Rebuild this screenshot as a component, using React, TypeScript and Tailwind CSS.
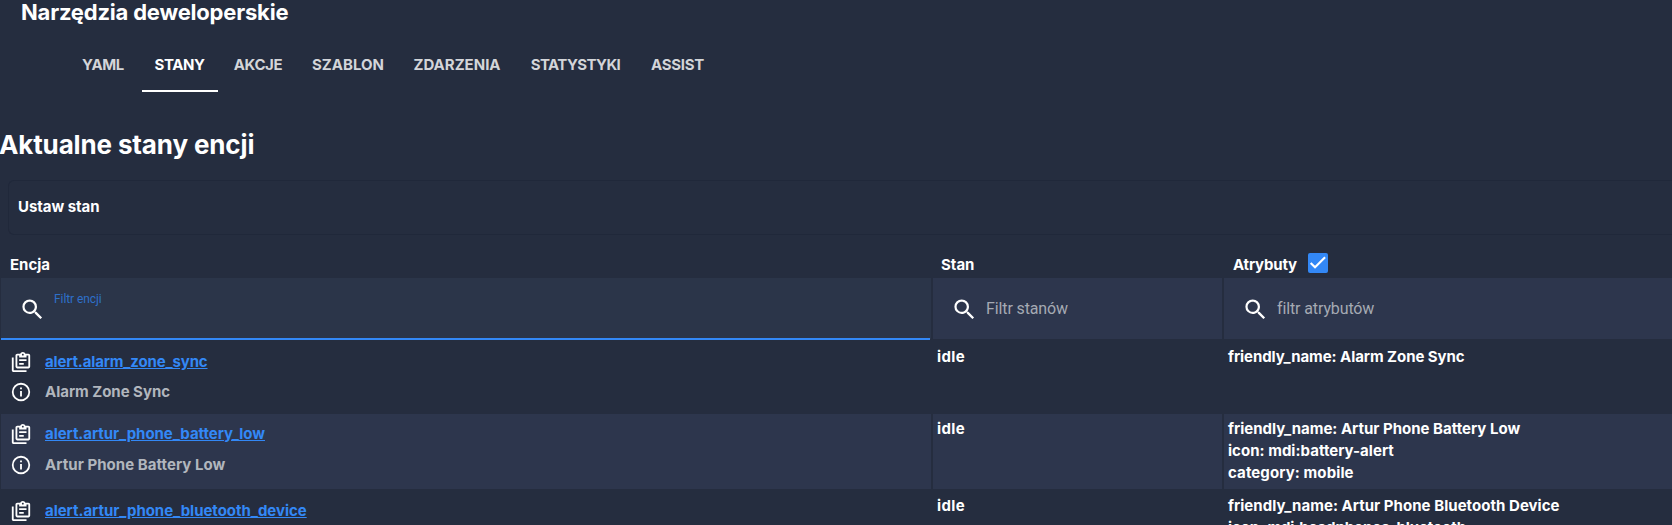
const tabs = [
  { label: "YAML", cls: "w-[75px] pr-[3px] tracking-[-0.4px]" },
  { label: "STANY", cls: "w-[76px] pr-px tracking-[-0.42px]", active: true },
  { label: "AKCJE", cls: "w-[80px] tracking-[-0.4px]" },
  { label: "SZABLON", cls: "w-[100px] tracking-[0px]" },
  { label: "ZDARZENIA", cls: "w-[118px] tracking-[0px]" },
  { label: "STATYSTYKI", cls: "w-[119px] tracking-[-0.6px]" },
  { label: "ASSIST", cls: "w-[85px] tracking-[-0.27px]" },
];

const rows = [
  {
    id: "alert.alarm_zone_sync",
    name: "Alarm Zone Sync",
    idCls: "tracking-[-0.15px]",
    nameCls: "tracking-[-0.03px]",
    height: "h-[73px]",
    pad: "pt-[9px]",
    gap: "mt-[6px]",
    top: "pt-[5px]",
    attrs: [{ t: "friendly_name: Alarm Zone Sync", c: "tracking-[-0.06px]" }],
  },
  {
    id: "alert.artur_phone_battery_low",
    name: "Artur Phone Battery Low",
    idCls: "tracking-[-0.05px]",
    nameCls: "tracking-[0.05px]",
    height: "h-[75px]",
    pad: "pt-[8px]",
    gap: "mt-[7px]",
    top: "pt-[4px]",
    alt: true,
    attrs: [
      { t: "friendly_name: Artur Phone Battery Low", c: "tracking-[0px]" },
      { t: "icon: mdi:battery-alert", c: "tracking-[0.03px]" },
      { t: "category: mobile", c: "tracking-[0.1px]" },
    ],
  },
  {
    id: "alert.artur_phone_bluetooth_device",
    name: "Artur Phone Bluetooth Device",
    idCls: "tracking-[-0.03px]",
    nameCls: "tracking-[0.05px]",
    height: "h-[97px]",
    pad: "pt-[10px]",
    gap: "mt-[7px]",
    top: "pt-[6px]",
    attrs: [
      { t: "friendly_name: Artur Phone Bluetooth Device", c: "tracking-[0.04px]" },
      { t: "icon: mdi:headphones-bluetooth", c: "tracking-[-0.1px]" },
    ],
  },
];

const columns = "grid grid-cols-[930px_289px_1fr] gap-x-[2px] pl-px";

function Icon({ d, className }: { d: string; className: string }) {
  return (
    <svg viewBox="0 0 24 24" fill="currentColor" className={className} aria-hidden="true">
      <path d={d} />
    </svg>
  );
}

const SEARCH =
  "M9.5,3A6.5,6.5 0 0,1 16,9.5C16,11.11 15.41,12.59 14.44,13.73L14.71,14H15.5L20.5,19L19,20.5L14,15.5V14.71L13.73,14.44C12.59,15.41 11.11,16 9.5,16A6.5,6.5 0 0,1 3,9.5A6.5,6.5 0 0,1 9.5,3M9.5,5C7,5 5,7 5,9.5C5,12 7,14 9.5,14C12,14 14,12 14,9.5C14,7 12,5 9.5,5Z";
const CLIPBOARD =
  "M4,7V21H18V23H4C2.9,23 2,22.1 2,21V7H4M20,3C21.1,3 22,3.9 22,5V17C22,18.1 21.1,19 20,19H8C6.9,19 6,18.1 6,17V5C6,3.9 6.9,3 8,3H11.18C11.6,1.84 12.7,1 14,1C15.3,1 16.4,1.84 16.82,3H20M14,3C13.45,3 13,3.45 13,4C13,4.55 13.45,5 14,5C14.55,5 15,4.55 15,4C15,3.45 14.55,3 14,3M10,7V5H8V17H20V5H18V7M15,15H10V13H15M18,11H10V9H18V11Z";
const INFO =
  "M11,9H13V7H11M12,20C7.59,20 4,16.41 4,12C4,7.59 7.59,4 12,4C16.41,4 20,7.59 20,12C20,16.41 16.41,20 12,20M12,2A10,10 0 0,0 2,12A10,10 0 0,0 12,22A10,10 0 0,0 22,12A10,10 0 0,0 12,2M11,17H13V11H11V17Z";

function Filter({ placeholder }: { placeholder: string }) {
  return (
    <div className="flex h-[61px] items-center bg-[#2d364d] pl-[18px]">
      <Icon d={SEARCH} className="mt-[2px] size-[27px] shrink-0" />
      <span className="ml-[8px] font-['Roboto'] text-base font-normal tracking-[-0.12px] text-[#a5aab3]">{placeholder}</span>
    </div>
  );
}

export default function App() {
  return (
    <div className="h-[525px] overflow-hidden bg-[#252d3f] font-['Inter',sans-serif] text-[15px] leading-[22px] font-bold whitespace-nowrap text-white">
      <header className="flex h-[92px] flex-col">
        <h1 className="h-[25px] pl-[21px] text-[22px] leading-[25px] tracking-[-0.2px]">Narzędzia deweloperskie</h1>
        <nav className="mt-[14px] flex h-[53px] pl-[67px]">
          {tabs.map((t) => (
            <div
              key={t.label}
              className={`flex items-center justify-center border-b-2 ${t.active ? "border-white text-white" : "border-transparent text-[#d3d5d9]"} ${t.cls}`}
            >
              {t.label}
            </div>
          ))}
        </nav>
      </header>

      <h2 className="mt-[35px] -ml-px h-9 text-[26px] leading-9 tracking-[-0.14px]">Aktualne stany encji</h2>

      <div className="mt-[17px] ml-2 h-[55px] rounded-l-md border border-r-0 border-[#20283a] pt-[15px] pl-[9px]">
        <span className="tracking-[-0.05px]">Ustaw stan</span>
      </div>

      <div className={`${columns} h-[43px]`}>
        <div className="pt-[19px] pl-[9px]">Encja</div>
        <div className="pt-[19px] pl-[8px]">Stan</div>
        <div className="flex pt-[18px] pl-[9px]">
          <span className="pt-px tracking-[-0.17px]">Atrybuty</span>
          <span className="ml-[11px] flex size-5 items-center justify-center rounded-xs bg-[#3388f6]">
            <svg viewBox="0 0 24 24" className="size-5" fill="none" stroke="currentColor" strokeWidth="3.1" aria-hidden="true">
              <path d="M1.73,12.91 8.1,19.28 22.79,4.59" transform="translate(1.8 1.4) scale(.82)" />
            </svg>
          </span>
        </div>
      </div>

      <div className={`${columns} h-[62px]`}>
        <div className="h-[61px] bg-[#2b3549]">
          <div className="mr-px flex h-[62px] items-start border-b-2 border-[#3388f6] pl-[18px]">
            <Icon d={SEARCH} className="mt-[18px] size-[27px] shrink-0" />
            <span className="mt-[12px] ml-[8px] font-['Roboto'] text-xs leading-[18px] font-normal tracking-[-0.08px] text-[#2e70c9]">
              Filtr encji
            </span>
          </div>
        </div>
        <Filter placeholder="Filtr stanów" />
        <Filter placeholder="filtr atrybutów" />
      </div>

      <div className="pt-px">
        {rows.map((r) => (
          <div key={r.id} className={`${columns} ${r.height}`}>
            <div className={`pl-[9px] ${r.pad} ${r.alt ? "bg-[#2d364d]" : ""}`}>
              <div className="flex h-6 items-center">
                <Icon d={CLIPBOARD} className="size-[22px] shrink-0" />
                <a className={`ml-[13px] text-[#3388f6] underline ${r.idCls}`}>{r.id}</a>
              </div>
              <div className={`flex h-6 items-center ${r.gap}`}>
                <Icon d={INFO} className="size-[22px] shrink-0" />
                <span className={`ml-[13px] text-[#b1b6bd] ${r.nameCls}`}>{r.name}</span>
              </div>
            </div>
            <div className={`pl-[4px] tracking-[0.4px] ${r.top} ${r.alt ? "bg-[#2d364d]" : ""}`}>idle</div>
            <div className={`pl-[4px] ${r.top} ${r.alt ? "bg-[#2d364d]" : ""}`}>
              {r.attrs.map((a) => (
                <div key={a.t} className={a.c}>{a.t}</div>
              ))}
            </div>
          </div>
        ))}
      </div>
    </div>
  );
}
